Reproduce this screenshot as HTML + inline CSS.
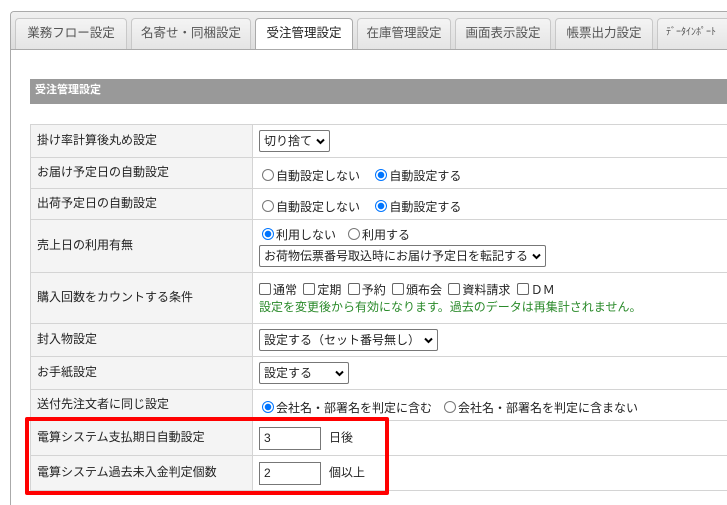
<!DOCTYPE html>
<html><head><meta charset="utf-8"><style>
*{box-sizing:border-box;margin:0;padding:0}
html,body{width:727px;height:505px;overflow:hidden}
body{background:#fff;font-family:"Liberation Sans","Noto Sans CJK JP",sans-serif;font-size:12px;color:#222;position:relative}
.outer{position:absolute;left:10px;top:11px;width:717px;height:494px;border:1px solid #aaa;border-right:none;border-bottom:none;border-radius:4px 0 0 0;background:#fff}
.tabbar{position:absolute;left:0;top:0;right:0;height:38px;background:linear-gradient(#f0f0f0,#ddd);border-bottom:1px solid #aaa;border-radius:4px 0 0 0;overflow:hidden}
.tab{position:absolute;top:6px;height:32px;border:1px solid #c8c8c8;border-bottom:none;border-radius:4px 4px 0 0;background:linear-gradient(#f4f4f4,#e4e4e4);color:#555;font-size:12.5px;text-align:center;line-height:28px}
.tab.act{background:#fff;border-color:#aaa;height:33px;color:#222}
.hdr{position:absolute;left:30px;top:79px;width:697px;height:25px;background:#999;color:#fff;font-weight:bold;font-size:11px;line-height:23px;padding-left:5px}
.tw{position:absolute;left:30px;top:124px;width:697px;height:381px;overflow:hidden}
table{width:720px;border-collapse:collapse}
td{border:1px solid #d4d4d4;padding:0 6px;vertical-align:middle}
td.l{width:222px;background:#f4f4f4;padding-bottom:4px}
.sel{display:inline-block;border:1px solid #777;border-radius:2px;height:22px;line-height:20px;padding:0 4px;background:#fff}
.sel svg{margin-left:4px;vertical-align:0}
.rad{display:inline-block;width:12px;height:12px;border:1px solid #777;border-radius:50%;vertical-align:-1px;margin-right:2px}
.rad.on{border:1px solid #0075ff;background:radial-gradient(#0075ff 0 3px,#fff 3.5px)}
.cb{display:inline-block;width:12px;height:12px;border:1px solid #666;border-radius:2px;vertical-align:-1px;margin:0 2px 0 3px}
.inp{display:inline-block;width:62px;height:23px;border:1px solid #777;padding-left:4px;line-height:21px;vertical-align:middle;margin-right:8px}
.red{position:absolute;left:25px;top:417px;width:364px;height:78px;border:4px solid #f00;border-radius:2px}
.rp{padding-top:4px;padding-left:9px}
</style></head><body>
<div class="outer"><div class="tabbar">
<div class="tab" style="left:4px;width:112px">業務フロー設定</div>
<div class="tab" style="left:120px;width:120px">名寄せ・同梱設定</div>
<div class="tab act" style="left:244px;width:98px">受注管理設定</div>
<div class="tab" style="left:346px;width:94px">在庫管理設定</div>
<div class="tab" style="left:444px;width:96px">画面表示設定</div>
<div class="tab" style="left:544px;width:98px">帳票出力設定</div>
<div class="tab" style="left:646px;width:100px;font-size:10px;text-align:left;padding-left:8px">ﾃﾞｰﾀｲﾝﾎﾟｰﾄ</div>
</div></div>
<div class="hdr">受注管理設定</div>
<div class="tw"><table>
<tr style="height:33px"><td class="l">掛け率計算後丸め設定</td><td><span class="sel">切り捨て<svg width="9" height="7" viewBox="0 0 9 7"><path d="M1 1.5L4.5 5L8 1.5" stroke="#000" stroke-width="2" fill="none"/></svg></span></td></tr>
<tr style="height:31px"><td class="l">お届け予定日の自動設定</td><td class="rp"><span class="rad"></span>自動設定しない　 <span class="rad on"></span>自動設定する</td></tr>
<tr style="height:31px"><td class="l">出荷予定日の自動設定</td><td class="rp"><span class="rad"></span>自動設定しない　 <span class="rad on"></span>自動設定する</td></tr>
<tr style="height:53px"><td class="l">売上日の利用有無</td><td><div style="margin-bottom:2px;padding-left:3px"><span class="rad on"></span>利用しない　<span class="rad"></span>利用する</div><span class="sel">お荷物伝票番号取込時にお届け予定日を転記する<svg width="9" height="7" viewBox="0 0 9 7"><path d="M1 1.5L4.5 5L8 1.5" stroke="#000" stroke-width="2" fill="none"/></svg></span></td></tr>
<tr style="height:51px"><td class="l">購入回数をカウントする条件</td><td><div><span class="cb" style="margin-left:0"></span>通常 <span class="cb"></span>定期 <span class="cb"></span>予約 <span class="cb"></span>頒布会 <span class="cb"></span>資料請求 <span class="cb"></span>ＤＭ</div><div style="color:#2a8a2a">設定を変更後から有効になります。過去のデータは再集計されません。</div></td></tr>
<tr style="height:33px"><td class="l">封入物設定</td><td><span class="sel">設定する（セット番号無し）<svg width="9" height="7" viewBox="0 0 9 7"><path d="M1 1.5L4.5 5L8 1.5" stroke="#000" stroke-width="2" fill="none"/></svg></span></td></tr>
<tr style="height:33px"><td class="l">お手紙設定</td><td><span class="sel">設定する　 &nbsp;<svg width="9" height="7" viewBox="0 0 9 7"><path d="M1 1.5L4.5 5L8 1.5" stroke="#000" stroke-width="2" fill="none"/></svg></span></td></tr>
<tr style="height:31px"><td class="l">送付先注文者に同じ設定</td><td class="rp"><span class="rad on"></span>会社名・部署名を判定に含む　<span class="rad"></span>会社名・部署名を判定に含まない</td></tr>
<tr style="height:35px"><td class="l">電算システム支払期日自動設定</td><td><span class="inp">3</span>日後</td></tr>
<tr style="height:35px"><td class="l">電算システム過去未入金判定個数</td><td><span class="inp">2</span>個以上</td></tr>
</table></div>
<div class="red"></div>
</body></html>
